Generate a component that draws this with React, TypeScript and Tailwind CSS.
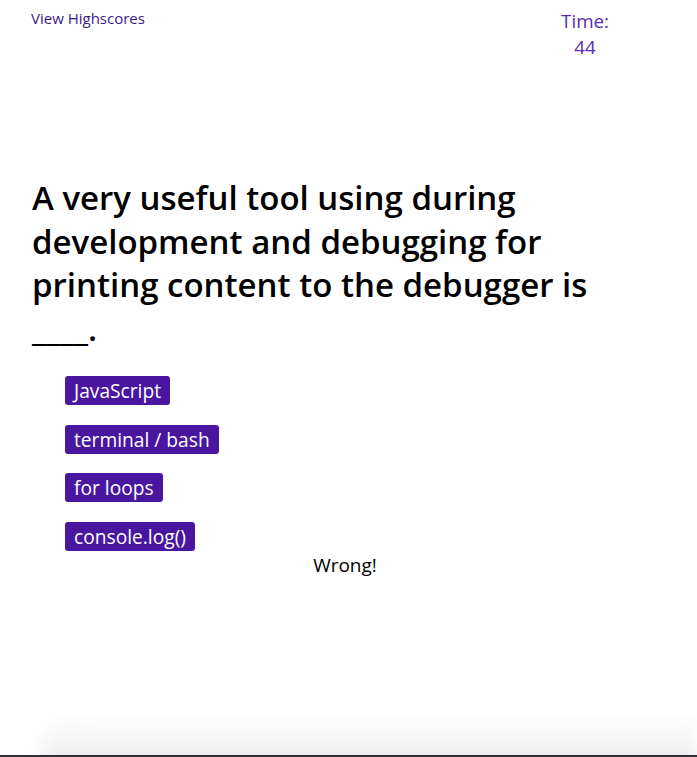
import React from 'react';

const choices = ['JavaScript', 'terminal / bash', 'for loops', 'console.log()'];

export default function App() {
  return (
    <div className="h-[757px] flex flex-col bg-white font-['Open_Sans',sans-serif] overflow-hidden">
      <div className="flex-1">
        <header className="flex justify-between items-start pt-[8px] pl-[31px] pr-[88px]">
          <a href="#" className="text-[15px] leading-[20px] text-[#3b1c82]">View Highscores</a>
          <div className="text-center text-[18.8px] leading-[26px] text-[#5a2cb0]">
            <div>Time:</div>
            <div>44</div>
          </div>
        </header>

        <main className="px-[32px] pt-[116px]">
          <h1 className="text-[33px] leading-[43.5px] font-semibold text-black max-w-[620px]">
            A very useful tool using during development and debugging for printing content to the debugger is ____.
          </h1>

          <ul className="mt-[26px] pl-[33px] flex flex-col gap-[19.5px]">
            {choices.map((c) => (
              <li key={c}>
                <button className="bg-[#4a159f] text-white text-[19.2px] leading-[25px] px-[9px] py-[2px] rounded-[3px]">
                  {c}
                </button>
              </li>
            ))}
          </ul>

          <p className="text-center text-[19px] leading-[25px] text-black mt-[2px] pr-[7px]">Wrong!</p>
        </main>
      </div>

      <div className="h-[40px] overflow-hidden">
        <div className="h-[56px] bg-gradient-to-b from-white to-[#e8e8e8] rounded-tl-[40px] ml-[40px] blur-[8px]"></div>
      </div>
      <div className="h-[2px] bg-[#2e3033]"></div>
    </div>
  );
}
